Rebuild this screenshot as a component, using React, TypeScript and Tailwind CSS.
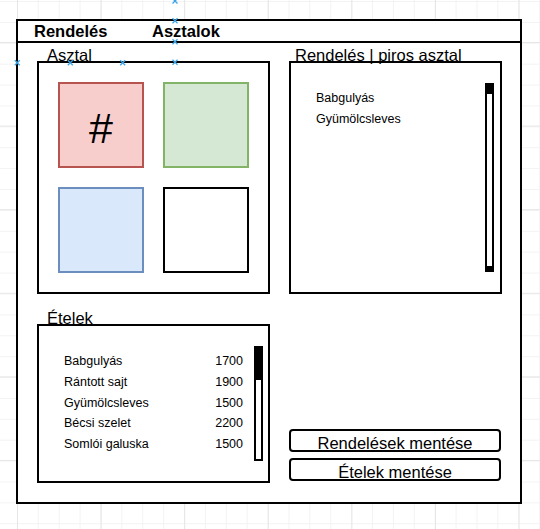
import React from "react"

const etelek = [
  { name: "Babgulyás", price: 1700 },
  { name: "Rántott sajt", price: 1900 },
  { name: "Gyümölcsleves", price: 1500 },
  { name: "Bécsi szelet", price: 2200 },
  { name: "Somlói galuska", price: 1500 },
]

const rendeles = ["Babgulyás", "Gyümölcsleves"]

// draw.io connection point markers
const markers = [
  [175, 1],
  [175, 20.7],
  [175, 41.7],
  [175, 62.3],
  [17.3, 62.7],
  [70.3, 62.7],
  [122.7, 62.7],
]

function Scrollbar({ thumb, end }: { thumb: string; end?: boolean }) {
  return (
    <div className="w-[9px] border-2 border-black bg-white flex flex-col justify-between">
      <div className={thumb} />
      {end && <div className="h-[4px] bg-black" />}
    </div>
  )
}

function Label({ children }: { children: React.ReactNode }) {
  return (
    <div className="h-[18px] pt-[4px] text-[16.5px] leading-[16px] whitespace-nowrap text-black">
      {children}
    </div>
  )
}

export default function App() {
  return (
    <div className="relative w-[540px] h-[529px] overflow-hidden bg-white bg-[linear-gradient(to_right,#e6e6e6_1px,transparent_1px),linear-gradient(to_bottom,#e6e6e6_1px,transparent_1px),linear-gradient(to_right,#f3f3f3_1px,transparent_1px),linear-gradient(to_bottom,#f3f3f3_1px,transparent_1px)] bg-[size:83.6px_83.6px,83.6px_83.6px,20.9px_20.9px,20.9px_20.9px] bg-[position:17px_42px,17px_42px,-4px_1px,-4px_1px] pl-[16px] pt-[19px] font-['Liberation_Sans',Arial,sans-serif] text-black">
      <div className="w-[506px] h-[485px] border-2 border-black bg-white flex flex-col">
        {/* header */}
        <div className="h-[22px] shrink-0 border-b-2 border-black flex pl-[16px] text-[16.5px] font-bold leading-[20px]">
          <span className="w-[118px]">Rendelés</span>
          <span>Asztalok</span>
        </div>

        {/* body */}
        <div className="grid grid-cols-[233px_213px] gap-x-[19px] pl-[19px]">
          <div>
            <div className="pl-[10px]">
              <Label>Asztal</Label>
            </div>
            <div className="w-[233px] h-[233px] border-2 border-black p-[19px] grid grid-cols-[86px_86px] grid-rows-[86px_86px] gap-[19px]">
              <div className="border-2 border-[#b85450] bg-[#f8cecc] flex items-center justify-center">
                <span className="text-[43px] leading-none translate-y-[3px]">#</span>
              </div>
              <div className="border-2 border-[#82b366] bg-[#d5e8d4]" />
              <div className="border-2 border-[#6c8ebf] bg-[#dae8fc]" />
              <div className="border-2 border-black bg-white" />
            </div>
          </div>

          <div>
            <div className="pl-[6px]">
              <Label>Rendelés | piros asztal</Label>
            </div>
            <div className="w-[213px] h-[233px] border-2 border-black flex">
              <div className="flex-1 pl-[25px] pt-[25px] text-[12.5px] leading-[20.8px]">
                {rendeles.map((r) => (
                  <div key={r}>{r}</div>
                ))}
              </div>
              <div className="flex my-[20px] mr-[6px]">
                <Scrollbar thumb="h-[9px] bg-black" end />
              </div>
            </div>
          </div>

          <div className="mt-[12px]">
            <div className="pl-[10px]">
              <Label>Ételek</Label>
            </div>
            <div className="w-[233px] h-[159px] border-2 border-black flex">
              <div className="flex-1 pl-[25px] pr-[11px] pt-[25px] text-[12.5px] leading-[20.8px]">
                {etelek.map((e) => (
                  <div key={e.name} className="flex justify-between">
                    <span>{e.name}</span>
                    <span>{e.price}</span>
                  </div>
                ))}
              </div>
              <div className="flex my-[20px] mr-[5px]">
                <Scrollbar thumb="h-[32px] bg-black" />
              </div>
            </div>
          </div>

          <div className="flex flex-col justify-end gap-[6px] pb-[2px]">
            <div className="w-[212px] h-[23px] border-2 border-black rounded-[4px] bg-white text-center text-[16.5px] leading-[18px] pt-[3px] whitespace-nowrap">
              Rendelések mentése
            </div>
            <div className="w-[212px] h-[23px] border-2 border-black rounded-[4px] bg-white text-center text-[16.5px] leading-[18px] pt-[3px] whitespace-nowrap">
              Ételek mentése
            </div>
          </div>
        </div>
      </div>

      <svg className="absolute inset-0 pointer-events-none" width={540} height={529}>
        {markers.map(([x, y], i) => (
          <g key={i} stroke="#3ba4e6" strokeWidth={1.3}>
            <line x1={x - 2.5} y1={y - 2.5} x2={x + 2.5} y2={y + 2.5} />
            <line x1={x - 2.5} y1={y + 2.5} x2={x + 2.5} y2={y - 2.5} />
          </g>
        ))}
      </svg>
    </div>
  )
}
